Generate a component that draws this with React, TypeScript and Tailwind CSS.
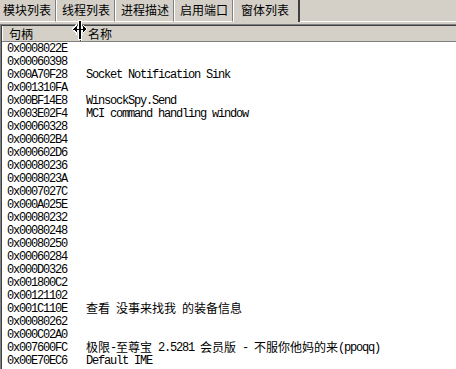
import React from "react";

const rows: [string, string][] = [
  ["0x0008022E", ""],
  ["0x00060398", ""],
  ["0x00A70F28", "Socket Notification Sink"],
  ["0x001310FA", ""],
  ["0x00BF14E8", "WinsockSpy.Send"],
  ["0x003E02F4", "MCI command handling window"],
  ["0x00060328", ""],
  ["0x000602B4", ""],
  ["0x000602D6", ""],
  ["0x00080236", ""],
  ["0x0008023A", ""],
  ["0x0007027C", ""],
  ["0x000A025E", ""],
  ["0x00080232", ""],
  ["0x00080248", ""],
  ["0x00080250", ""],
  ["0x00060284", ""],
  ["0x000D0326", ""],
  ["0x001800C2", ""],
  ["0x00121102", ""],
  ["0x001C110E", "查看 没事来找我 的装备信息"],
  ["0x00080262", ""],
  ["0x000C02A0", ""],
  ["0x007600FC", "极限-至尊宝 2.5281 会员版 - 不服你他妈的来(ppoqq)"],
  ["0x00E70EC6", "Default IME"],
];

const tabs = ["模块列表", "线程列表", "进程描述", "启用端口"];

// split a caption into runs of CJK and ascii so each gets its own width
function Mixed({ text }: { text: string }) {
  const parts = text.match(/[\u3000-\u9fff]+|[^\u3000-\u9fff]+/g) || [];
  return (
    <>
      {parts.map((p, i) =>
        /[\u3000-\u9fff]/.test(p) ? (
          <span key={i} className="relative -top-[2px] inline-block align-top h-[13px] leading-[13px] text-[12px] tracking-normal font-['Noto_Sans_CJK_SC',sans-serif]">{p}</span>
        ) : (
          <span key={i} className="inline-block align-top h-[13px] leading-[13px] whitespace-pre">{p}</span>
        )
      )}
    </>
  );
}

function ResizeCursor() {
  return (
    <svg className="absolute left-[71px] top-[19px]" width="17" height="21" viewBox="0 0 17 21" shapeRendering="crispEdges">
      {/* white outline */}
      <path d="M6.5 0.5h4v7h1v-3l5 5.5-5 5.5v-3h-1v8h-4v-8h-1v3l-5-5.5 5-5.5v3h1z" fill="#fff" />
      {/* black body */}
      <rect x="7.5" y="1.5" width="2" height="18" fill="#000" />
      <rect x="2" y="9.5" width="13" height="1" fill="#000" />
      <path d="M2 10l3.5-3.5v7z" fill="#000" />
      <path d="M15 10l-3.5-3.5v7z" fill="#000" />
    </svg>
  );
}

export default function App() {
  return (
    <div className="relative w-[456px] h-[369px] overflow-hidden bg-[#d4d0c8] font-['Noto_Sans_CJK_SC',sans-serif] text-black">
      <div className="flex h-[22px]">
        {tabs.map((t, i) => (
          <div
            key={t}
            className={
              i === 0
                ? "h-full w-[56px] pl-[3px] border-b border-b-white border-r border-r-[#808080] text-[12px] leading-[20px]"
                : "h-full w-[59px] pl-[5px] border-b border-b-white border-l border-l-white border-r border-r-[#808080] text-[12px] leading-[20px]"
            }
          >
            {t}
          </div>
        ))}
        <div className="h-full w-[67px] pl-[7px] border-l border-l-white border-r-2 border-r-[#404040] text-[12px] leading-[20px]">
          窗体列表
        </div>
        <div className="flex-1 h-full border-b border-b-white" />
      </div>

      <div className="mt-[2px] h-[345px] border-t border-l border-[#808080]">
        <div className="h-full border-t border-l border-[#404040] bg-white">
          <div className="flex h-[16px] bg-[#d4d0c8] border-b border-b-[#808080]">
            <div className="w-[79px] h-full pl-[6px] border-l border-l-white border-r border-r-[#404040] text-[12px] leading-[15px]">
              句柄
            </div>
            <div className="flex-1 h-full pl-[6px] border-l border-l-white text-[12px] leading-[15px]">名称</div>
          </div>
          <div className="pt-[1px] font-['Liberation_Mono',monospace] text-[12px] tracking-[-1.2px]">
            {rows.map(([h, name]) => (
              <div key={h} className="flex h-[13px] leading-[13px]">
                <div className="w-[84px] pl-[5px]">{h}</div>
                <div className="flex-1 whitespace-nowrap">
                  <Mixed text={name} />
                </div>
              </div>
            ))}
          </div>
        </div>
      </div>

      <ResizeCursor />
    </div>
  );
}
